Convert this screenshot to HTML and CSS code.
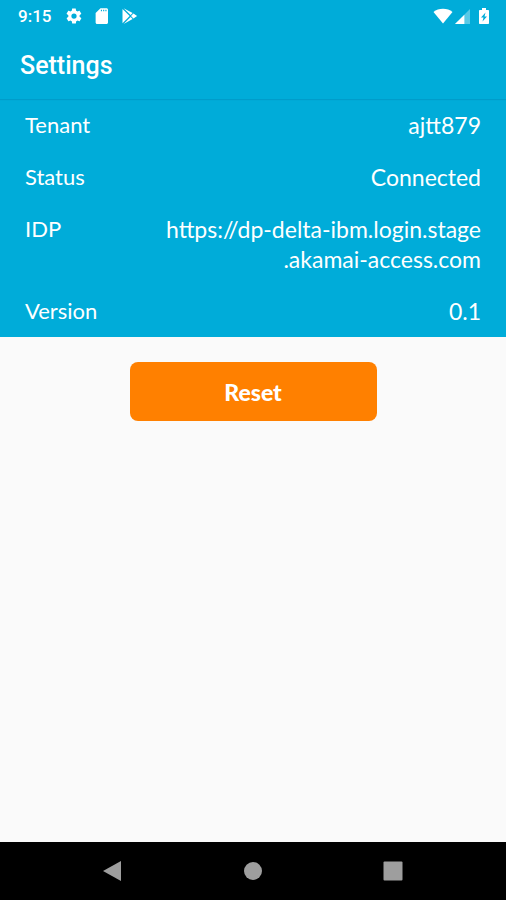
FILE: index.html
```html
<!DOCTYPE html>
<html lang="en">
<head>
<meta charset="utf-8">
<meta name="viewport" content="width=device-width, initial-scale=1">
<title>Settings</title>
<link rel="stylesheet" href="styles.css">
</head>
<body>
<div class="status-bar">
  <span class="clock">9:15</span>
  <div class="notifications">
    <svg class="icon" viewBox="0 0 24 24" aria-hidden="true"><path d="M19.4 13c0-.3.1-.6.1-1s0-.7-.1-1l2.1-1.600c.2-.2.300-.4.100-.700l-2-3.400c-.1-.2-.4-.3-.6-.2l-2.500 1c-.5-.4-1.100-.700-1.700-1l-.4-2.600c0-.3-.2-.4-.5-.4h-4c-.2 0-.5.2-.5.4l-.4 2.600c-.6.3-1.200.6-1.700 1l-2.500-1c-.2-.1-.5 0-.6.2l-2 3.400c-.1.3-.1.5.1.700L4.500 11c0 .3-.1.600-.1 1s0 .7.1 1l-2.100 1.600c-.2.2-.3.400-.1.700l2 3.400c.1.2.4.3.6.2l2.500-1c.5.4 1.100.7 1.700 1l.4 2.600c0 .3.3.4.5.4h4c.3 0 .5-.2.5-.4l.4-2.600c.6-.3 1.200-.6 1.700-1l2.500 1c.2.1.5 0 .6-.2l2-3.400c.1-.3.1-.5-.1-.7L19.400 13zM12 15.500a3.500 3.500 0 1 1 0-7 3.500 3.500 0 0 1 0 7z"/></svg>
    <svg class="icon" viewBox="0 0 24 24" aria-hidden="true"><path d="M18 1.500h-8L3.500 8v12.500c0 1.100.9 2 2 2H18c1.100 0 2-.9 2-2v-17c0-1.100-.9-2-2-2zm-6 4h-1.500v-2H12v2zm3 0h-1.500v-2H15v2zm3 0h-1.500v-2H18v2z"/></svg>
    <svg class="icon" viewBox="0 0 24 24" aria-hidden="true"><path d="M2 2.500v19L11.500 12z"/><path d="M3.500 1.500l9.300 9.300 2.700-2.700z"/><path d="M3.500 22.500l9.300-9.300 2.700 2.700z"/><path d="M16.600 8.800L13.400 12l3.200 3.200L21.500 12z"/></svg>
  </div>
  <div class="system">
    <svg class="icon wifi" viewBox="0 0 20 16" aria-hidden="true"><path d="M10 15.500L.5 4C3 1.800 6.300.7 10 .7S17 1.800 19.500 4z"/></svg>
    <svg class="icon signal" viewBox="0 0 16 16" aria-hidden="true"><path class="faint" d="M16 0v16H0z"/><path d="M10 6v10H0z"/></svg>
    <svg class="icon battery" viewBox="0 0 12 18" aria-hidden="true"><path fill-rule="evenodd" d="M4 1h4v2h2c.6 0 1 .4 1 1v12c0 .6-.4 1-1 1H2c-.6 0-1-.4-1-1V4c0-.6.4-1 1-1h2zM7.500 5.500L3 10.500h2.500l-1 4L9 9.500H6.500z"/></svg>
  </div>
</div>
<header class="app-bar"><h1>Settings</h1></header>
<main>
  <dl class="details">
    <div class="row"><dt>Tenant</dt><dd>ajtt879</dd></div>
    <div class="row"><dt>Status</dt><dd>Connected</dd></div>
    <div class="row"><dt>IDP</dt><dd>https://dp-delta-ibm.login.stage<br>.akamai-access.com</dd></div>
    <div class="row"><dt>Version</dt><dd>0.1</dd></div>
  </dl>
  <div class="actions"><button class="reset" type="button">Reset</button></div>
</main>
<nav class="nav-bar" aria-label="System">
  <button type="button" aria-label="Back"><svg viewBox="0 0 22 22" aria-hidden="true"><path d="M1 11L19 1v20z"/></svg></button>
  <button type="button" aria-label="Home"><svg viewBox="0 0 22 22" aria-hidden="true"><circle cx="11" cy="11" r="9"/></svg></button>
  <button type="button" aria-label="Overview"><svg viewBox="0 0 22 22" aria-hidden="true"><rect x="1.500" y="1.500" width="19" height="19" rx="1"/></svg></button>
</nav>
</body>
</html>
```
FILE: styles.css
```css
* {
  box-sizing: border-box;
}

body {
  margin: 0;
  min-height: 100vh;
  display: flex;
  flex-direction: column;
  background: #fafafa;
  color: #fff;
  font-family: Lato, sans-serif;
}

.status-bar {
  display: flex;
  align-items: center;
  height: 32px;
  padding: 0 16px 0 18px;
  background: #00acd9;
}

.clock {
  font: 500 17px/32px Roboto, sans-serif;
}

.notifications {
  display: flex;
  gap: 10px;
  margin-left: 14px;
}

.system {
  display: flex;
  align-items: center;
  gap: 2px;
  margin-left: auto;
}

.icon {
  display: block;
  width: 18px;
  height: 18px;
  fill: #fff;
}

.wifi {
  width: 20px;
  height: 16px;
}

.signal {
  width: 15px;
  height: 15px;
}

.battery {
  width: 12px;
  margin-left: 6px;
}

.faint {
  opacity: 0.35;
}

.app-bar {
  position: relative;
  padding: 0 20px;
  background: #00acd9;
  box-shadow: 0 1px 1px #009cca;
}

h1 {
  margin: 0;
  font: 500 25px/67px Roboto, sans-serif;
}

main {
  flex: 1;
}

.details {
  margin: 0;
  padding: 0 25px;
  background: #00acd9;
  font-size: 22px;
  line-height: 30px;
}

.row {
  display: flex;
  justify-content: space-between;
  padding: 11px 0;
}

dd {
  margin: 0;
  font-size: 23px;
  text-align: right;
}

.actions {
  display: flex;
  justify-content: center;
  padding: 25px;
}

.reset {
  width: 54%;
  min-width: 247px;
  height: 59px;
  border: 0;
  border-radius: 8px;
  background: #ff8000;
  color: #fff;
  font: 900 23px/30px Lato, sans-serif;
}

.nav-bar {
  display: flex;
  justify-content: center;
  align-items: center;
  gap: 118px;
  height: 58px;
  background: #000;
}

.nav-bar button {
  width: 22px;
  height: 22px;
  padding: 0;
  border: 0;
  background: none;
}

.nav-bar svg {
  display: block;
  fill: #9e9e9e;
}
```
